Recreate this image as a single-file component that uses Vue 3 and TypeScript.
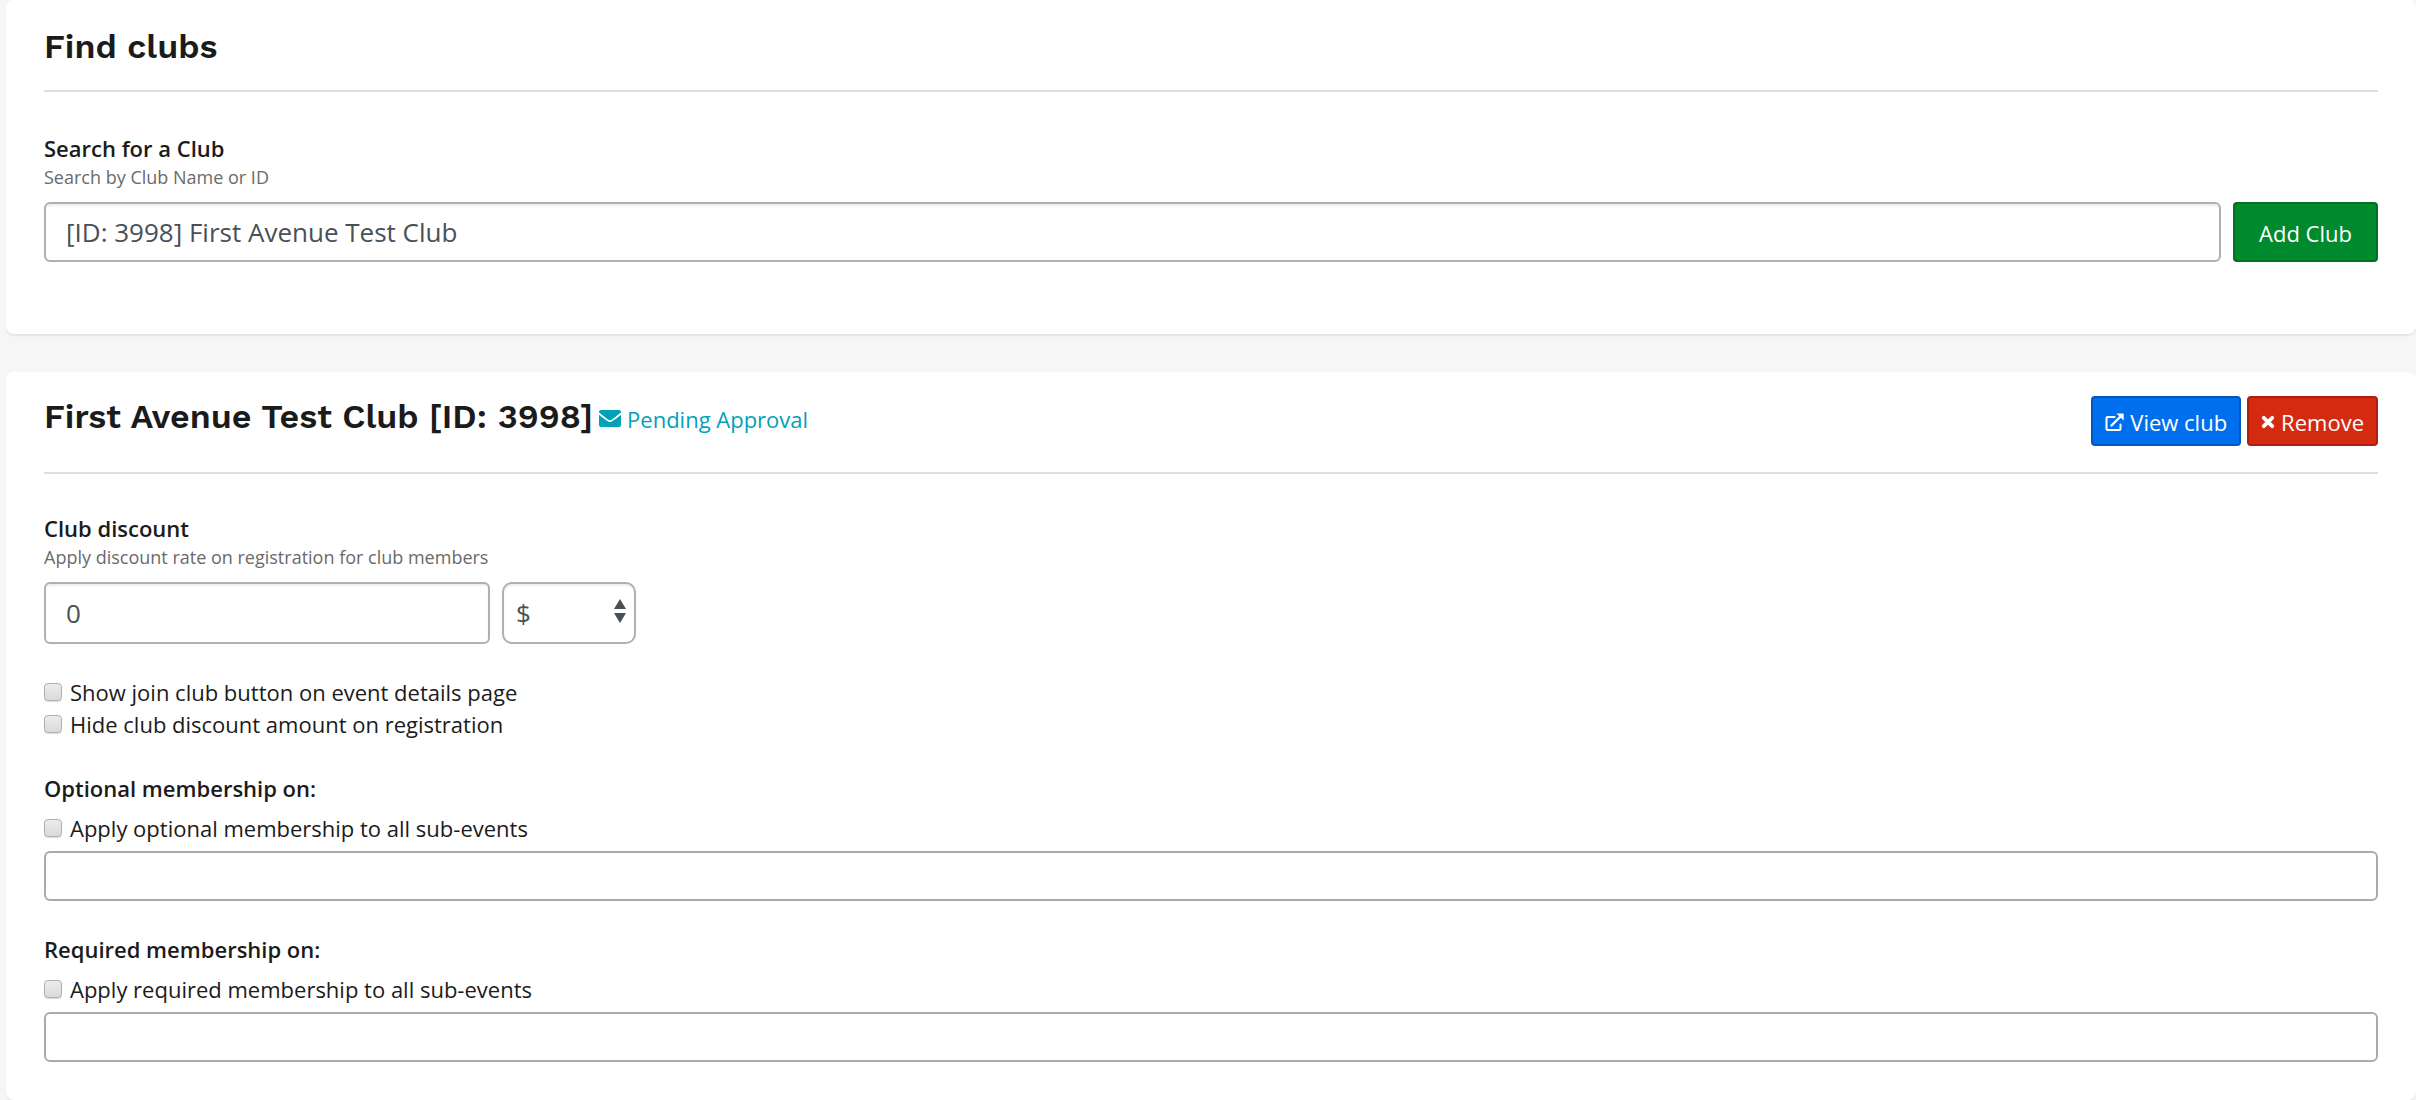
<script setup lang="ts">
import { ref } from 'vue'

interface Membership {
  key: string
  title: string
  label: string
  applyAll: boolean
  events: string
}

const search = ref('[ID: 3998] First Avenue Test Club')
const discount = ref('0')
const unit = ref('$')
const showJoin = ref(false)
const hideAmount = ref(false)
const memberships = ref<Membership[]>([
  { key: 'optional', title: 'Optional membership on:', label: 'Apply optional membership to all sub-events', applyAll: false, events: '' },
  { key: 'required', title: 'Required membership on:', label: 'Apply required membership to all sub-events', applyAll: false, events: '' },
])
</script>

<template>
  <main class="page">
    <section class="card">
      <header class="card-header find-header">
        <h2 class="title">Find clubs</h2>
      </header>
      <form class="find-body" @submit.prevent>
        <label class="label" for="club-search">Search for a Club</label>
        <p class="hint">Search by Club Name or ID</p>
        <div class="row">
          <input id="club-search" v-model="search" class="control search" type="text" />
          <button class="btn btn-add" type="submit">Add Club</button>
        </div>
      </form>
    </section>

    <section class="card">
      <header class="card-header club-header">
        <div class="heading">
          <h2 class="title">First Avenue Test Club [ID: 3998]</h2>
          <span class="status">
            <svg width="22" height="18" viewBox="0 0 22 18" aria-hidden="true">
              <path fill="currentColor" d="M2 0h18a2 2 0 0 1 2 2v.6c-2.600 2.200-5.600 4.500-8.600 6.600-.8.600-1.600 1.100-2.400 1.100s-1.600-.5-2.400-1.100C5.600 7.100 2.600 4.800 0 2.600V2a2 2 0 0 1 2-2zM0 4.700c2.400 2 4.900 3.900 7.600 5.800 1.200.9 2.200 1.500 3.400 1.500s2.200-.6 3.400-1.500c2.700-1.900 5.200-3.800 7.600-5.800V15a2 2 0 0 1-2 2H2a2 2 0 0 1-2-2z" />
            </svg>
            Pending Approval
          </span>
        </div>
        <div class="actions">
          <button class="btn btn-view" type="button">
            <svg width="19" height="19" viewBox="0 0 19 19" aria-hidden="true">
              <path d="M9.500 4H2.800A1.300 1.300 0 0 0 1.500 5.300v10.400A1.300 1.300 0 0 0 2.800 17h11.400a1.300 1.300 0 0 0 1.300-1.300V11.500" fill="none" stroke="currentColor" stroke-width="2" stroke-linecap="round" />
              <path d="M6.500 12.500 15.500 3.500" fill="none" stroke="currentColor" stroke-width="2.400" stroke-linecap="round" />
              <path d="M11.500.5H18q.7 0 .7.700V7.500z" fill="currentColor" />
            </svg>
            View club
          </button>
          <button class="btn btn-remove" type="button">
            <svg width="14" height="14" viewBox="0 0 14 14" aria-hidden="true">
              <path d="M2.800 2.800 11.200 11.200M11.200 2.800 2.800 11.200" fill="none" stroke="currentColor" stroke-width="3.800" stroke-linecap="round" />
            </svg>
            Remove
          </button>
        </div>
      </header>

      <form class="club-body" @submit.prevent>
        <label class="label" for="discount">Club discount</label>
        <p class="hint">Apply discount rate on registration for club members</p>
        <div class="row">
          <input id="discount" v-model="discount" class="control discount" type="text" />
          <div class="unit">
            <select v-model="unit" class="control unit-select" aria-label="Discount unit">
              <option value="$">$</option>
              <option value="%">%</option>
            </select>
            <svg class="arrows" width="12" height="24" viewBox="0 0 12 24" aria-hidden="true">
              <path fill="#495057" d="M6 0 12 10H0zM0 14H12L6 24z" />
            </svg>
          </div>
        </div>

        <div class="group">
          <label class="check"><input v-model="showJoin" type="checkbox" />Show join club button on event details page</label>
          <label class="check"><input v-model="hideAmount" type="checkbox" />Hide club discount amount on registration</label>
        </div>

        <div v-for="m in memberships" :key="m.key" class="group">
          <label class="label" :for="m.key + '-events'">{{ m.title }}</label>
          <label class="check apply-all"><input v-model="m.applyAll" type="checkbox" />{{ m.label }}</label>
          <input :id="m.key + '-events'" v-model="m.events" class="control tags" type="text" />
        </div>
      </form>
    </section>
  </main>
</template>

<style>
body {
  margin: 0;
  background: #f6f6f6;
}
</style>

<style scoped>
.page {
  display: flex;
  flex-direction: column;
  gap: 38px;
  padding-left: 6px;
  font-family: "Open Sans", sans-serif;
  font-size: 22px;
  line-height: 32px;
  color: #1b1b1b;
}

.page *,
.page *::before {
  box-sizing: border-box;
}

.card {
  padding: 0 38px;
  background: #fff;
  border-radius: 8px;
  box-shadow: 0 2px 2px rgba(0, 0, 0, 0.07);
}

.card-header {
  display: flex;
  justify-content: space-between;
  align-items: flex-start;
  border-bottom: 2px solid #dedede;
}

.find-header {
  padding: 26px 0 24px;
}

.club-header {
  padding: 24px 0 26px;
}

.heading {
  display: flex;
  align-items: baseline;
  gap: 6px;
}

.title {
  margin: 0;
  font-family: "Work Sans", Inter, sans-serif;
  font-size: 34px;
  font-weight: 600;
  line-height: 40px;
}

.status {
  display: flex;
  align-items: center;
  gap: 6px;
  color: #00a2b8;
}

.actions {
  display: flex;
  gap: 6px;
}

.btn {
  display: flex;
  align-items: center;
  justify-content: center;
  gap: 6px;
  height: 50px;
  padding: 2px 12px 0;
  border: 2px solid;
  border-radius: 4px;
  font: inherit;
  color: #fff;
}

.btn-add {
  height: 60px;
  padding: 2px 24px 0;
  background: #008a2e;
  border-color: #007026;
}

.btn-view {
  background: #006fee;
  border-color: #0059bf;
}

.btn-remove {
  background: #d42a10;
  border-color: #ac210d;
}

.find-body {
  padding: 40px 0 72px;
}

.club-body {
  padding: 38px 0;
}

.label {
  display: block;
  font-weight: 600;
}

.hint {
  margin: 0 0 12px;
  font-size: 18px;
  line-height: 26px;
  color: #6a6a6a;
}

.row {
  display: flex;
  gap: 12px;
}

.control {
  height: 62px;
  padding: 0 20px;
  border: 2px solid #b0b0b0;
  border-radius: 6px;
  background: #fff;
  box-shadow: inset 0 2px 2px rgba(0, 0, 0, 0.07);
  font: inherit;
  font-size: 26px;
  color: #495057;
}

.search {
  flex: 1;
  height: 60px;
}

.discount {
  width: 446px;
}

.unit {
  position: relative;
  width: 134px;
}

.unit-select {
  width: 100%;
  padding: 0 12px;
  border-radius: 10px;
  appearance: none;
}

.arrows {
  position: absolute;
  top: 17px;
  right: 10px;
  pointer-events: none;
}

.group {
  margin-top: 32px;
}

.check {
  display: flex;
  align-items: center;
  gap: 8px;
}

.check input {
  width: 18px;
  height: 18px;
  margin: 0;
  appearance: none;
  border: 1px solid #b0b0b0;
  border-radius: 4px;
  background: linear-gradient(#ececec, #dadada);
  box-shadow: 0 1px 1px rgba(0, 0, 0, 0.15);
}

.check input:checked {
  background: #006fee;
}

.apply-all {
  margin: 8px 0 7px;
}

.tags {
  display: block;
  width: 100%;
  height: 50px;
  border-color: #aaa;
  box-shadow: none;
}
</style>
